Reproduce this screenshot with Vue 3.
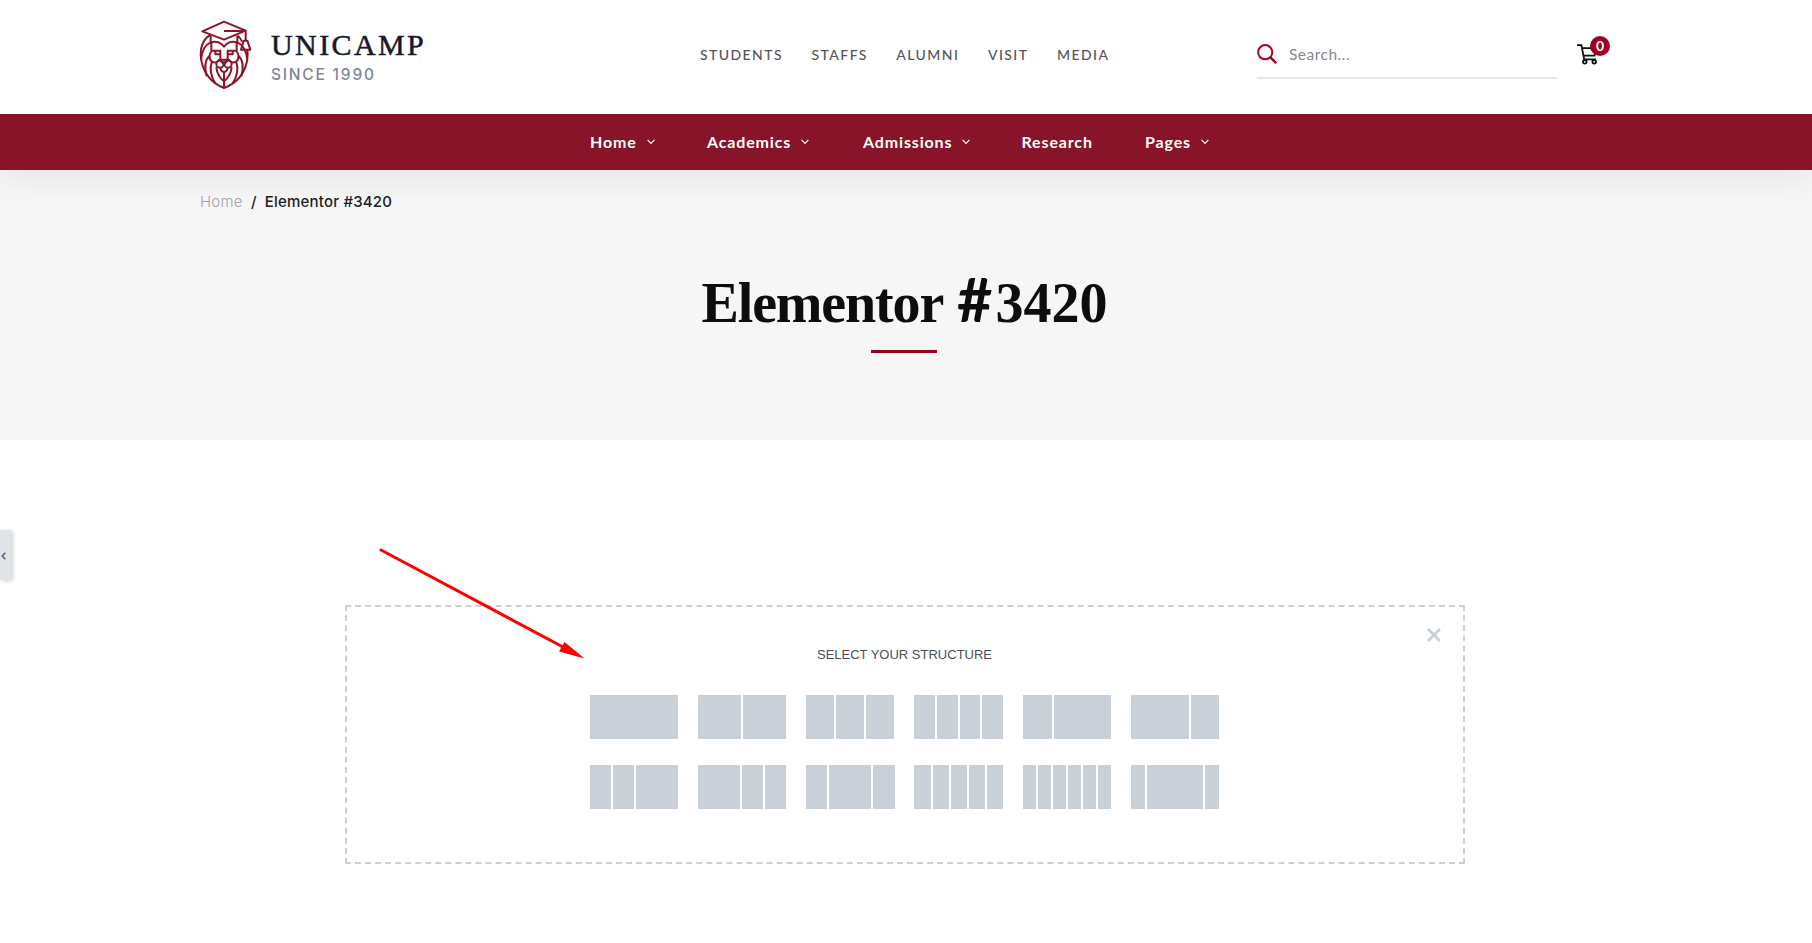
<script setup>
const topLinks = ['Students', 'Staffs', 'Alumni', 'Visit', 'Media']
const menu = [
  { label: 'Home', sub: true },
  { label: 'Academics', sub: true },
  { label: 'Admissions', sub: true },
  { label: 'Research', sub: false },
  { label: 'Pages', sub: true },
]
const presets = [
  [1],
  [1, 1],
  [1, 1, 1],
  [1, 1, 1, 1],
  [29, 57],
  [57, 28],
  [1, 1, 2],
  [2, 1, 1],
  [1, 2, 1],
  [1, 1, 1, 1, 1],
  [1, 1, 1, 1, 1, 1],
  [1, 4, 1],
]
</script>

<template>
  <div class="page">
    <header class="top">
      <a class="brand">
        <svg class="lion" viewBox="0 0 210 270" width="70" height="90">
          <g fill="none" stroke="#8b1429" stroke-width="6" stroke-linejoin="round">
            <path d="M37 64 L102 35 L167 62 L102 89 Z" />
            <path d="M102 63 H167 V92" />
            <path d="M161 92 H172 L181 119 H153 Z" />
            <path d="M62 75 C42 84 31 108 32 134 C35 188 66 220 102 234 C140 220 171 188 173 134 L172 119" />
            <path d="M62 77 V97 C78 93 92 97 102 110 C112 97 126 93 142 97 V77" />
            <path d="M62 97 C46 104 35 124 33 150" />
            <path d="M142 97 C158 104 170 124 172 150" />
            <path d="M142 77 C149 81 153 88 156 95" />
            <path d="M64 97 V122 M140 97 V122" />
            <path d="M91 122 H66 C56 132 56 148 66 155 C76 160 84 156 88 148 M113 122 H138 C148 132 148 148 138 155 C128 160 120 156 116 148" />
            <path d="M76 122 V133 H91 V122 V148 M128 122 V133 H113 V122 V148" />
            <path d="M88 149 H116 L102 163 Z" />
            <circle cx="90" cy="162" r="11" />
            <circle cx="114" cy="162" r="11" />
            <path d="M91 173 C93 190 111 190 113 173" />
            <path d="M102 185 V234" />
            <path d="M66 154 C58 176 63 200 76 220 M138 154 C146 176 141 200 128 220" />
            <path d="M79 171 C80 190 90 204 102 214 C114 204 124 190 125 171" />
            <path d="M59 137 C44 150 44 176 50 199 M145 137 C160 150 160 176 154 199" />
          </g>
        </svg>
        <span class="words">
          <span class="name">UNICAMP</span>
          <span class="since">SINCE 1990</span>
        </span>
      </a>
      <nav class="links">
        <a v-for="l in topLinks" :key="l">{{ l }}</a>
      </nav>
      <div class="search">
        <svg width="20" height="20" viewBox="0 0 20 20" fill="none" stroke="#a50022" stroke-width="2">
          <circle cx="8.2" cy="8.2" r="7.1" />
          <path d="M13.2 13.2 L19.2 19.2" stroke-width="2.4" />
        </svg>
        <span>Search...</span>
      </div>
      <div class="cart">
        <svg width="22" height="21" viewBox="0 0 22 21" fill="none" stroke="#111" stroke-width="1.8">
          <path d="M1 1.2 H5.4 L8.2 15.3 H20 M6 4.2 H20 L18.6 11.6 H7.6" />
          <circle cx="8.8" cy="17.8" r="1.8" />
          <circle cx="18.2" cy="17.8" r="1.8" />
        </svg>
        <span class="badge">0</span>
      </div>
    </header>

    <nav class="menu">
      <a v-for="m in menu" :key="m.label">
        <span>{{ m.label }}</span>
        <svg v-if="m.sub" width="8" height="6" viewBox="0 0 8 6" fill="none" stroke="#fff" stroke-width="1.2">
          <path d="M0.6 0.9 L4 4.4 L7.4 0.9" />
        </svg>
      </a>
    </nav>

    <section class="banner">
      <div class="crumbs"><a>Home</a><span class="slash">/</span><b>Elementor #3420</b></div>
      <h1><span class="word">Elementor</span> <span class="hash">#</span>3420</h1>
      <div class="rule"></div>
    </section>

    <main class="canvas">
      <section class="dropzone">
        <svg class="close" width="14" height="14" viewBox="0 0 14 14" fill="none" stroke="#c9d0d8" stroke-width="2.7">
          <path d="M1 1 L13 13 M13 1 L1 13" />
        </svg>
        <div class="prompt">SELECT YOUR STRUCTURE</div>
        <div class="presets">
          <div v-for="(p, i) in presets" :key="i" class="preset">
            <i v-for="(w, j) in p" :key="j" :style="{ flexGrow: w }"></i>
          </div>
        </div>
      </section>
    </main>

    <div class="tab">
      <svg width="5" height="8" viewBox="0 0 5 8" fill="none" stroke="#5b6570" stroke-width="1.6">
        <path d="M4.3 0.8 L1.2 4 L4.3 7.2" />
      </svg>
    </div>
    <svg class="arrow" width="210" height="116" viewBox="0 0 210 116">
      <path d="M6 6 L188 103" stroke="#f00" stroke-width="3" stroke-linecap="round" />
      <path d="M189.5 98 L184 107.5 L209.5 114.5 Z" fill="#f00" />
    </svg>
  </div>
</template>

<style>
body {
  margin: 0;
  background: #fff;
}
</style>

<style scoped>
.page {
  position: relative;
  width: 1812px;
  height: 943px;
  overflow: hidden;
  background: #fff;
  font-family: Lato, "Liberation Sans", sans-serif;
}
.top {
  position: relative;
  z-index: 1;
  display: flex;
  height: 114px;
  box-sizing: border-box;
  padding-left: 190px;
  background: #fff;
}
.brand {
  display: flex;
  width: 510px;
}
.lion {
  margin-top: 10px;
}
.words {
  display: flex;
  flex-direction: column;
  padding: 28px 0 0 11px;
}
.name {
  font: 30px/34px "Liberation Serif", serif;
  letter-spacing: 2.4px;
  color: #17172f;
  -webkit-text-stroke: 0.5px #17172f;
}
.since {
  margin-top: 3px;
  font: 500 15.5px/20px Inter, sans-serif;
  letter-spacing: 1.8px;
  color: #7d8795;
}
.links {
  display: flex;
  width: 557px;
  gap: 28.5px;
  font-size: 14px;
  font-weight: 500;
  line-height: 110px;
  letter-spacing: 1.43px;
  text-transform: uppercase;
  color: #555;
}
.search {
  display: flex;
  align-items: center;
  width: 300px;
  height: 48px;
  margin-top: 29px;
  border-bottom: 2px solid #e7e7e7;
  font-size: 15.5px;
  color: #888;
}
.search svg {
  margin-top: 2px;
}
.search span {
  margin-left: 12px;
  letter-spacing: 0.5px;
  margin-top: 2px;
}
.cart {
  position: relative;
  margin: 44px 0 0 19px;
}
.badge {
  position: absolute;
  left: 14px;
  top: -8px;
  width: 20px;
  height: 20px;
  border-radius: 50%;
  background: #a10023;
  color: #fff;
  text-align: center;
  font: 700 14px/20px Lato, sans-serif;
}
.menu {
  position: relative;
  display: grid;
  grid-template-columns: 117px 156px 158.5px 123.5px 100px;
  height: 56px;
  padding-left: 590px;
  background: #871428;
  box-shadow: 0 10px 30px rgba(0, 0, 0, 0.065);
  color: #fff;
  font-size: 16px;
  font-weight: 700;
  letter-spacing: 0.85px;
}
.menu a {
  display: flex;
  align-items: center;
  height: 55px;
}
.menu span {
  line-height: 20px;
  padding-top: 1px;
}
.menu svg {
  margin-left: 10px;
}
.banner {
  height: 270px;
  background: #f6f6f6;
  text-align: center;
}
.crumbs {
  display: flex;
  padding: 21px 0 0 200px;
  font: 15px/22px Inter, sans-serif;
  letter-spacing: 0.2px;
  color: #222;
}
.crumbs a {
  color: #a4a4a4;
  font-weight: 300;
}
.slash {
  margin: 0 8px 0 8.5px;
  font-weight: 500;
}
.crumbs b {
  font-weight: 500;
}
h1 {
  margin: 58px 0 0;
  font: 700 56px/64px "Liberation Serif", serif;
  color: #0d0d0d;
  padding-right: 3px;
}
.word {
  letter-spacing: -1.15px;
}
.hash {
  margin-right: 3px;
  font: 700 61px/50px Lato, "Liberation Sans", sans-serif;
}
.rule {
  width: 66px;
  height: 3px;
  margin: 15px 0 0 871px;
  background: #9b0020;
}
.canvas {
  padding: 165px 347px 0 345px;
}
.dropzone {
  position: relative;
  height: 259px;
  box-sizing: border-box;
  border: 2px dashed #c9d0d8;
}
.close {
  position: absolute;
  right: 22px;
  top: 21px;
}
.prompt {
  padding: 40px 1px 0 0;
  font: 13px/16px "Liberation Sans", Arial, sans-serif;
  text-align: center;
  color: #495157;
}
.presets {
  display: grid;
  grid-template-columns: repeat(6, 1fr);
  gap: 26px 20px;
  width: 629px;
  margin: 32px 0 0 243px;
}
.preset {
  display: flex;
  gap: 2px;
  height: 44px;
}
.preset i {
  flex: 1 1 0;
  background: #c9d0d8;
}
.tab {
  position: absolute;
  left: 0;
  top: 530px;
  display: flex;
  align-items: center;
  width: 11px;
  height: 50px;
  padding-left: 1px;
  box-sizing: border-box;
  background: #e0e4e9;
  box-shadow: 2px 1px 4px rgba(0, 0, 0, 0.18);
}
.tab svg {
  margin-top: 2px;
}
.arrow {
  position: absolute;
  left: 375px;
  top: 544px;
}
</style>
